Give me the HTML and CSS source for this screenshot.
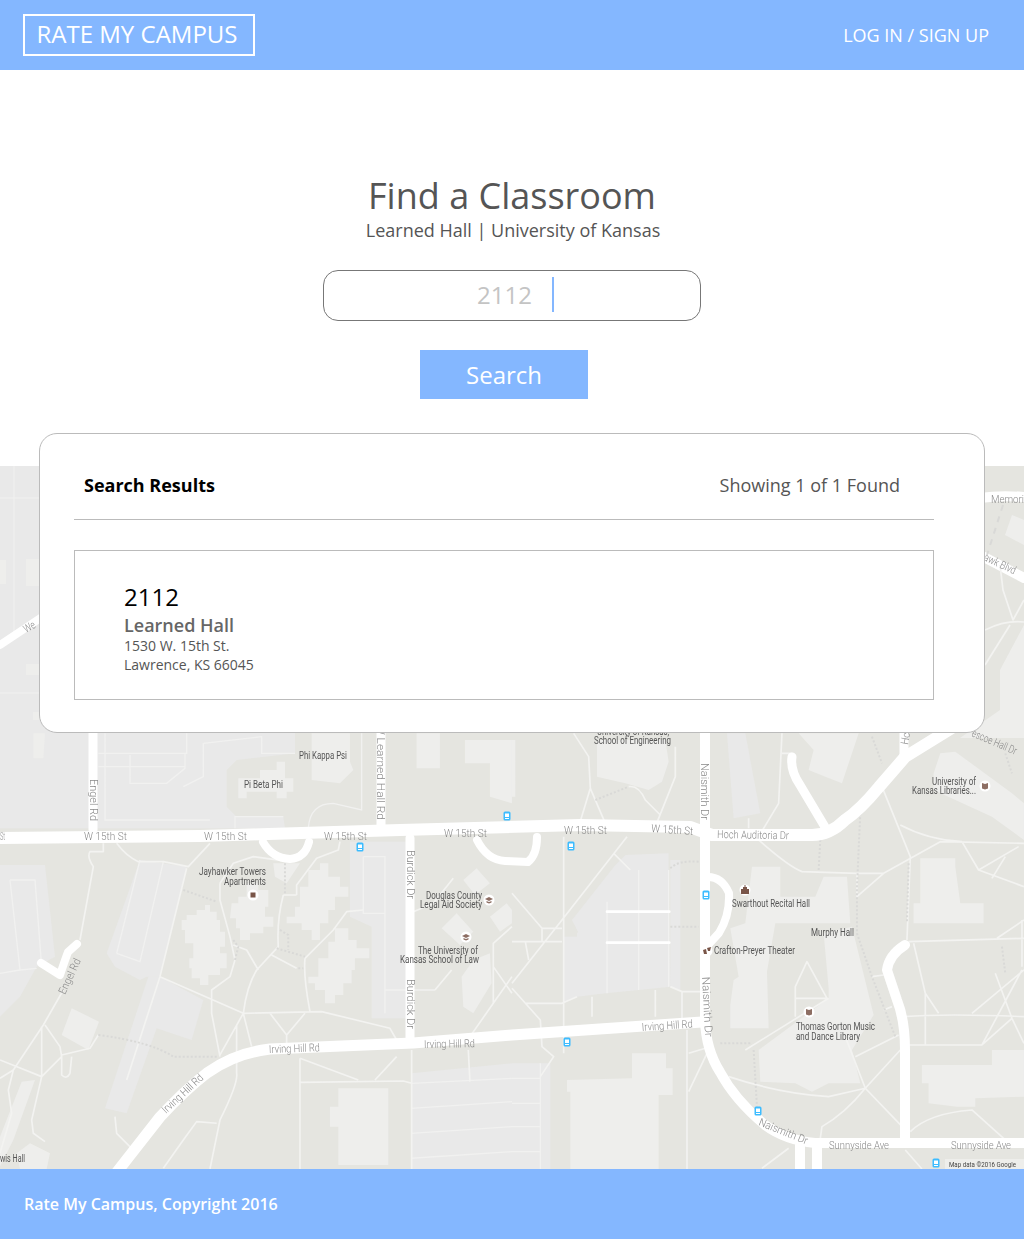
FILE: index.html
```html
<!DOCTYPE html>
<html lang="en">
<head>
    <meta charset="UTF-8">
    <meta name="viewport" content="width=device-width, initial-scale=1.0">
    <title>Rate My Campus</title>
    <link rel="stylesheet" href="styles.css">
</head>
<body>
    <header class="topbar">
        <a class="logo" href="#">RATE MY CAMPUS</a>
        <a class="login" href="#">LOG IN / SIGN UP</a>
    </header>

    <main class="content">
        <!-- map sits behind the results panel -->
        <svg class="map" viewBox="0 466 1024 703" aria-hidden="true">
            <defs>
                <g id="bus">
                    <rect x="-3.5" y="-4.5" width="7" height="9" rx="1.5" fill="#3dbcff"/>
                    <rect x="-2" y="-2.5" width="4" height="3.5" fill="#fff"/>
                    <rect x="-2" y="2" width="4" height="1" fill="#fff"/>
                </g>
                <circle id="poi" r="5.5" fill="#fff"/>
                <path id="book" d="M-3-3 L0-2 L3-3 V2.5 L0 3.5 L-3 2.5Z" fill="#8d6e63"/>
                <path id="cap" d="M-4-1 L0-3 L4-1 L0 1Z M-2.5 1 L0 2 L2.5 1 V2.5 L0 3.5 L-2.5 2.5Z" fill="#8d6e63"/>
            </defs>

            <rect x="0" y="466" width="1024" height="703" fill="#e5e5e0"/>

            <!-- top strip either side of the panel -->
            <g>
                <rect x="0" y="466" width="45" height="272" fill="#e9e9e9"/>
                <path class="thin" stroke-width=".8" d="M14 466V640 M0 498H45 M0 693H45"/>
                <path class="bld" d="M0 560H6V584H0Z M26 559H39V586H26Z M26 664H39V675H26Z M33 712H45V738H33Z"/>
                <path class="road" stroke-width="8" d="M0 645L45 615"/>
                <path class="bld" d="M1012 515L1024 520V545L1005 535Z M1024 625L1000 670V710L960 738H1024Z"/>
                <path class="road" stroke-width="10" d="M980 498Q1000 495 1024 497 M980 555L1024 578"/>
                <path class="thin" stroke-width="1.7" d="M1000 565L1003 590L1013 620L1024 600 M985 630Q1005 620 1024 622 M985 665L1010 625"/>
                <path class="dots" stroke-width="2" d="M1003 505L987 555"/>
            </g>

            <!-- west half of the campus -->
            <g transform="translate(0 720) scale(.3333)">
                <path class="lot" d="M0 0H885V100L710 120L680 150V260L710 290L850 290L855 325H0Z"/>
                <path class="lot" d="M0 435H135L165 710L110 740L60 830L0 890Z"/>
                <path class="lot" d="M320 700L420 420L560 440L480 770L440 770L420 780L345 740Z"/>
                <path class="lot" d="M480 770L610 840L575 960L470 925L380 1180L315 1165L445 770Z"/>
                <path class="lot" d="M1050 365H1220V895H1115V620L1050 590Z"/>
                <path class="lot" d="M1235 1060L1536 1030V1347H1235Z"/>
                <path class="lotline" d="M30 480H105L125 740 M30 480L60 750 M0 760L60 750L110 745 M295 100H560V40 M390 105V190H500L555 145V100 M295 140H555 M610 70L785 50V100H885 M550 200L610 170V70 M315 40V300H630 M350 700L420 420 M350 700L420 725L490 425 M1090 410H1155V810 M1090 410V580H1155 M1155 880V810H1305"/>
                <path class="lotline" d="M1235 1165L1536 1145 M1235 1240L1536 1220 M1235 1315L1536 1295 M1235 1090L1536 1075"/>
                <path class="bld" d="M215 865L297 905L265 990L185 945Z M65 1085L105 1080L40 1260L0 1340V1250Z M50 1300L90 1270L150 1300L140 1347H60Z"/>
                <!-- jayhawker towers -->
                <path class="bld" d="M545 600H560V585H590V570H615V555H630V575H650V600H660V635H675V680H660V700H680V745H660V765H625V795H600V775H575V745H568V715H580V670H555V630H545Z"/>
                <path class="bld" d="M695 550H715V530H740V490H775V510H805V560H795V590H820V620H790V640H750V660H720V625H708V595H690Z"/>
                <path class="bld" d="M860 590H885V560H900V500H925V450H960V430H985V470H1020V500H1045V530H1005V570H985V610H960V660H935V630H905V610H860Z"/>
                <path class="bld" d="M925 770H955V715H985V665H1005V625H1045V660H1070V685H1108V715H1065V750H1055V790H1030V825H1005V850H975V810H945V790H925Z"/>
                <path class="bld" d="M820 430H900L860 490L825 470Z"/>
                <path class="bld" d="M935 40H1050V125L1060 150L1020 190L935 180Z M715 175H780V150H830V125H855V175H880V215H860V235H830V215H740V235H715Z M100 40H135L130 115H100Z M1250 40H1320V145H1250Z M1395 60H1536V250L1470 230V130H1395Z"/>
                <path class="bld" d="M1390 480L1430 445L1470 490L1425 525Z M1325 625L1370 580L1420 635L1380 675Z M1470 590L1520 550L1536 570V610L1500 635Z M1385 770L1420 720L1470 700L1475 790L1420 880L1390 860Z M990 1160H1015V1105H1165V1335H1015V1220H990Z"/>
                <path class="lotline" d="M705 325V290H850 M925 325Q930 250 1000 250L1085 270V40"/>
                <path class="thin" stroke-width="5" d="M350 370Q380 410 415 425L490 425L565 440L630 370 M310 370V395H270Q260 410 280 440L240 660 M190 810L130 915L40 1050L0 1075 M135 915L180 980L185 1010L125 1070L0 1020 M125 920V1070L95 1200L100 1240L135 1265 M295 945L270 985L185 1005 M185 1010V1065Q200 1080 210 1060L215 1010 M40 1050L25 1110L35 1180L0 1300"/>
                <path class="thin" stroke-width="5" d="M480 770L730 880 M730 880L965 875L1170 925L1190 960 M1190 1010L1125 1080 M900 1015L1075 1080 M900 1087L1210 1083L1235 1090 M900 1015V1347 M1235 990V1347 M810 880L860 945L915 880 M860 945V970 M730 880L660 1005 M730 880L755 980 M710 915V1060Q715 1090 660 1200L630 1347 M850 525Q830 600 835 680L770 750Q740 800 730 880 M890 525H850 M1020 365L1015 390L950 415L890 495V525 M815 705L890 745 M915 715L1000 630L1040 575L1090 570 M915 715Q910 770 930 875 M660 490V540L690 650L705 720L690 770L635 810V880L660 1010 M660 490L700 430L760 410L870 425 M700 675L740 690L775 750 M1230 580L1300 550L1360 475 M1305 810L1355 750 M1405 990L1410 1085 M1480 850V670L1536 620 M1480 740L1536 820 M1410 950L1480 850L1536 770 M490 1345L550 1260L590 1205L650 1210 M345 1190L350 1240L395 1285 M560 445L480 770L380 1080"/>
                <path class="dots" stroke-width="6" d="M550 510L650 545 M295 945Q450 965 520 1010H655 M855 430V525 M840 630L865 645V690 M830 685L915 710 M895 745H910 M700 660L715 680L705 720"/>
            </g>

            <!-- east half of the campus -->
            <g transform="translate(512 720) scale(.3333)">
                <path class="lot" d="M0 1030H115V1347H0Z M195 640L355 450H470L475 800L380 810L280 820L195 830Z M155 650H195V830L155 850Z M180 600L310 435L340 405L470 400V450H355L200 640Z M475 420H505V810L475 800Z M645 40H700L745 280L665 295Z"/>
                <path class="lotline" d="M380 450V810 M470 450V800 M285 545V820 M0 1075H85 M0 1150H85 M0 1220H85 M0 1295H85 M85 1030V1347"/>
                <path class="bld" d="M720 440H805V530H910L935 470H1005L1015 610H790L765 755L770 925H655V855L665 780L680 770L655 625L700 610Z"/>
                <path class="bld" d="M935 640L1020 620L1085 885L1045 910L1030 960H1000L950 835V805Z M740 990L950 835V805H1050L1085 885L1020 990L1045 1090H950L900 1115L850 1090L745 1085Z"/>
                <path class="bld" d="M255 60H460L470 125L450 185L410 210L340 190L320 185L255 170Z M890 40H1040L1010 130L990 190L940 170L890 150L905 90L860 40Z M1265 160L1285 100L1330 95L1500 220L1536 250V360L1440 290L1265 210Z M1225 415H1330V440L1345 550H1415V610H1205V550H1225Z M1230 1035H1440V990H1536V1130L1390 1135V1160H1335L1250 1150V1090H1230Z M165 1080L360 1075V1000H462V1045H482V1125H440V1347H175V1115H165Z M0 60H10V230H0Z"/>
                <path class="thin" stroke-width="5" d="M185 40L230 110L235 205 M235 205L280 310 M235 205L200 320 M350 200Q380 195 400 240L445 285 M490 80V170L430 320 M155 350V1000 M345 350L150 600L0 790 M305 400L355 450 M0 520L90 625H150 M90 625V665H0 M40 665L50 720 M90 665H150 M0 805L85 900L90 980L125 1010L85 1070 M40 850H150L195 830 M240 830V890 M430 810V890 M475 800L510 815H565 M510 815V900 M525 930V1347 M530 1000L580 985 M530 1115L590 990 M650 1070Q800 1120 950 1130L1060 1105 M1060 1105L1185 1235 M1060 1105Q1000 1180 930 1220L925 1255 M1060 1105L1000 950 M1030 1010L1160 945 M1060 1105L1165 990 M750 1345L830 1285 M700 990L950 835 M850 890V800L885 725L945 835H850"/>
                <path class="thin" stroke-width="5" d="M740 360Q830 440 870 455L1035 460H1115 M1035 460V530L1115 460 M1115 460L1285 365L1536 370 M1165 315Q1250 360 1350 365 M1350 365L1400 450L1536 500 M1400 450L1520 380 M1440 475L1480 410 M1110 200L1195 410L1185 660 M1190 665L1536 655 M1205 670L1240 820V975 M1240 820L1280 880 M1175 890Q1300 880 1536 890 M1190 975H1410L1530 750 M1380 880L1536 750 M1450 760L1500 895L1536 970 M1410 975L1500 895 M1455 655L1536 600 M1530 600V740 M1195 1235Q1250 1180 1380 1170L1480 1260 M1080 770L1115 765 M1115 870L1140 860 M810 100H840 M810 40L800 250L740 350 M710 295V325 M1180 1290L1230 1347"/>
                <path class="dots" stroke-width="6" d="M250 240L350 200 M475 620H560 M475 445Q500 420 560 425 M625 970H715 M725 990L735 1160 M925 360L920 450 M1045 280L1035 500V640L1080 770L1150 950 M1190 430L1185 605 M1080 50L1110 130 M1470 680L1480 760 M1480 100L1500 160"/>
                <path class="road" stroke-width="8" d="M285 575H472 M285 668H472"/>
            </g>

            <!-- main roads, page coordinates -->
            <g>
                <path class="road" stroke-width="12" d="M0 838L200 836L400 830L580 825L690 827L712 835H812Q830 835 845 820Q860 810 879 787L905 757L952 728"/>
                <path class="road" stroke-width="9" d="M93 733V830 M381 733V828 M410 838V1042 M792 757Q790 770 800 785L825 827 M904 733V755"/>
                <path class="road" stroke-width="10" d="M705 733V1020Q706 1050 720 1072Q735 1100 765 1125Q785 1140 815 1143H1024"/>
                <path class="road" stroke-width="11" d="M117 1172L160 1117Q185 1090 207 1073Q235 1053 270 1049L413 1043L512 1035L702 1022"/>
                <path class="road" stroke-width="8" d="M263 842Q272 858 290 859Q305 858 309 842 M477 840Q487 860 505 861L528 862Q537 855 537 837 M708 877Q722 877 729 893Q730 915 719 933L708 945"/>
                <path class="road" stroke-width="8" d="M41 963L60 975Q65 960 68 952L77 944"/>
                <path class="road" stroke-width="10" d="M905 945Q889 955 887 970L897 1000Q905 1020 905 1050V1143 M800 1145V1169 M817 1145V1169"/>
            </g>

            <!-- road names -->
            <g class="roadname">
                <text x="0" y="840" textLength="5" lengthAdjust="spacingAndGlyphs">St</text>
                <text x="84" y="840" textLength="43" lengthAdjust="spacingAndGlyphs">W 15th St</text>
                <text x="204" y="840" textLength="43" lengthAdjust="spacingAndGlyphs">W 15th St</text>
                <text x="324" y="840" textLength="43" lengthAdjust="spacingAndGlyphs">W 15th St</text>
                <text x="444" y="837" textLength="43" lengthAdjust="spacingAndGlyphs">W 15th St</text>
                <text x="564" y="834" textLength="43" lengthAdjust="spacingAndGlyphs">W 15th St</text>
                <text transform="translate(651 832) rotate(4)" textLength="42" lengthAdjust="spacingAndGlyphs">W 15th St</text>
                <text transform="translate(717 838) rotate(1)" textLength="72" lengthAdjust="spacingAndGlyphs">Hoch Auditoria Dr</text>
                <text transform="translate(269 1053) rotate(-2)" textLength="51" lengthAdjust="spacingAndGlyphs">Irving Hill Rd</text>
                <text transform="translate(424 1048) rotate(-1)" textLength="51" lengthAdjust="spacingAndGlyphs">Irving Hill Rd</text>
                <text transform="translate(642 1031) rotate(-4)" textLength="51" lengthAdjust="spacingAndGlyphs">Irving Hill Rd</text>
                <text transform="translate(166 1114) rotate(-43)" textLength="52" lengthAdjust="spacingAndGlyphs">Irving Hill Rd</text>
                <text transform="translate(90 779) rotate(90)" textLength="42" lengthAdjust="spacingAndGlyphs">Engel Rd</text>
                <text transform="translate(65 995) rotate(-65)" textLength="38" lengthAdjust="spacingAndGlyphs">Engel Rd</text>
                <text transform="translate(377 724) rotate(90)" textLength="96" lengthAdjust="spacingAndGlyphs">W Learned Hall Rd</text>
                <text transform="translate(407 850) rotate(90)" textLength="49" lengthAdjust="spacingAndGlyphs">Burdick Dr</text>
                <text transform="translate(407 979) rotate(90)" textLength="50" lengthAdjust="spacingAndGlyphs">Burdick Dr</text>
                <text transform="translate(701 763) rotate(90)" textLength="57" lengthAdjust="spacingAndGlyphs">Naismith Dr</text>
                <text transform="translate(702 977) rotate(87)" textLength="60" lengthAdjust="spacingAndGlyphs">Naismith Dr</text>
                <text transform="translate(758 1125) rotate(22)" textLength="52" lengthAdjust="spacingAndGlyphs">Naismith Dr</text>
                <text x="829" y="1149" textLength="60" lengthAdjust="spacingAndGlyphs">Sunnyside Ave</text>
                <text x="951" y="1149" textLength="60" lengthAdjust="spacingAndGlyphs">Sunnyside Ave</text>
                <text x="991" y="503" textLength="33" lengthAdjust="spacingAndGlyphs">Memori</text>
                <text transform="translate(26 633) rotate(-30)" textLength="12" lengthAdjust="spacingAndGlyphs">We</text>
                <text transform="translate(983 560) rotate(25)" textLength="34" lengthAdjust="spacingAndGlyphs">awk Blvd</text>
                <text transform="translate(971 736) rotate(23)" textLength="48" lengthAdjust="spacingAndGlyphs">escoe Hall Dr</text>
                <text transform="translate(908 745) rotate(-80)" textLength="12" lengthAdjust="spacingAndGlyphs">Hc</text>
            </g>

            <!-- places -->
            <g class="placename">
                <text x="299" y="759" textLength="48" lengthAdjust="spacingAndGlyphs">Phi Kappa Psi</text>
                <text x="244" y="788" textLength="39" lengthAdjust="spacingAndGlyphs">Pi Beta Phi</text>
                <text x="199" y="875" textLength="67" lengthAdjust="spacingAndGlyphs">Jayhawker Towers</text>
                <text x="224" y="885" textLength="42" lengthAdjust="spacingAndGlyphs">Apartments</text>
                <text x="426" y="899" textLength="56" lengthAdjust="spacingAndGlyphs">Douglas County</text>
                <text x="420" y="908" textLength="62" lengthAdjust="spacingAndGlyphs">Legal Aid Society</text>
                <text x="418" y="954" textLength="60" lengthAdjust="spacingAndGlyphs">The University of</text>
                <text x="400" y="963" textLength="79" lengthAdjust="spacingAndGlyphs">Kansas School of Law</text>
                <text x="0" y="1162" textLength="25" lengthAdjust="spacingAndGlyphs">wis Hall</text>
                <text x="597" y="735" textLength="72" lengthAdjust="spacingAndGlyphs">University of Kansas,</text>
                <text x="594" y="744" textLength="77" lengthAdjust="spacingAndGlyphs">School of Engineering</text>
                <text x="932" y="785" textLength="44" lengthAdjust="spacingAndGlyphs">University of</text>
                <text x="912" y="794" textLength="64" lengthAdjust="spacingAndGlyphs">Kansas Libraries...</text>
                <text x="732" y="907" textLength="78" lengthAdjust="spacingAndGlyphs">Swarthout Recital Hall</text>
                <text x="811" y="936" textLength="43" lengthAdjust="spacingAndGlyphs">Murphy Hall</text>
                <text x="714" y="954" textLength="81" lengthAdjust="spacingAndGlyphs">Crafton-Preyer Theater</text>
                <text x="796" y="1030" textLength="79" lengthAdjust="spacingAndGlyphs">Thomas Gorton Music</text>
                <text x="796" y="1040" textLength="64" lengthAdjust="spacingAndGlyphs">and Dance Library</text>
            </g>

            <!-- pins -->
            <use href="#bus" x="507" y="816"/>
            <use href="#bus" x="360" y="847"/>
            <use href="#bus" x="571" y="846"/>
            <use href="#bus" x="706" y="895"/>
            <use href="#bus" x="567" y="1042"/>
            <use href="#bus" x="758" y="1111"/>
            <use href="#bus" x="936" y="1163"/>

            <use href="#poi" x="253" y="895"/>
            <rect x="250.500" y="892.500" width="5" height="5" fill="#795548"/>
            <use href="#poi" x="489" y="900"/>
            <use href="#cap" x="489" y="900"/>
            <use href="#poi" x="466" y="937"/>
            <use href="#cap" x="466" y="937"/>
            <use href="#poi" x="745" y="890"/>
            <path d="M741 894V889H743V887H744.500V885H745.500V887H747V889H749V894Z" fill="#795548"/>
            <use href="#poi" x="707" y="951"/>
            <path d="M703 950L706 949L707 954L704 954Z M707 948L711 947L710 951L708 951Z" fill="#795548"/>
            <use href="#poi" x="809" y="1012"/>
            <use href="#book" x="809" y="1012"/>
            <use href="#poi" x="985" y="786"/>
            <use href="#book" x="985" y="786"/>

            <rect x="945" y="1159" width="79" height="10" fill="#fff" opacity=".35"/>
            <text class="credit" x="949" y="1167" textLength="67" lengthAdjust="spacingAndGlyphs">Map data ©2016 Google</text>
        </svg>

        <section class="hero">
            <h1>Find a Classroom</h1>
            <p class="subtitle">Learned Hall | University of Kansas</p>
            <div class="searchbox">
                <span class="query">2112</span>
                <span class="caret"></span>
            </div>
            <button class="btn-search">Search</button>
        </section>

        <section class="results">
            <div class="results-head">
                <h2>Search Results</h2>
                <span class="count">Showing 1 of 1 Found</span>
            </div>
            <div class="result-card">
                <div class="room">2112</div>
                <div class="building">Learned Hall</div>
                <div class="address">1530 W. 15th St.</div>
                <div class="address">Lawrence, KS 66045</div>
            </div>
        </section>
    </main>

    <footer class="footer">Rate My Campus, Copyright 2016</footer>
</body>
</html>
```

FILE: styles.css
```css
body {
    font-family: "Open Sans", Arial, sans-serif;
    margin: 0;
    color: #555;
    background-color: #fff;
}
.topbar {
    height: 70px;
    box-sizing: border-box;
    padding: 0 35px 0 23px;
    display: flex;
    align-items: center;
    justify-content: space-between;
    background-color: #84b7ff;
}
.logo {
    width: 232px;
    height: 42px;
    box-sizing: border-box;
    padding: 0 4px 3px 0;
    border: 2px solid #fff;
    display: flex;
    align-items: center;
    justify-content: center;
    color: #fff;
    font-size: 24px;
    text-decoration: none;
}
.login {
    color: #fff;
    font-size: 18px;
    text-decoration: none;
}
.content {
    position: relative;
    height: 1099px;
}
.map {
    position: absolute;
    left: 0;
    bottom: 0;
    width: 1024px;
    height: 703px;
    display: block;
    filter: blur(.4px);
}
.thin {
    fill: none;
    stroke: #f3f3f1;
    stroke-linejoin: round;
}
.dots {
    fill: none;
    stroke: #d9d9d7;
    stroke-dasharray: 6 6;
}
.road {
    fill: none;
    stroke: #fff;
    stroke-linecap: round;
    stroke-linejoin: round;
}
.bld {
    fill: #eeeeec;
}
.lot {
    fill: #e9e9e9;
}
.lotline {
    fill: none;
    stroke: #f1f1f0;
    stroke-width: 4;
}
.roadname text {
    font-family: Roboto, sans-serif;
    font-size: 11px;
    font-weight: 300;
    fill: #8a8a8a;
}
.placename text {
    font-family: Roboto, sans-serif;
    font-size: 10px;
    fill: #555;
}
.credit {
    font-family: Roboto, sans-serif;
    font-size: 8px;
    fill: #444;
}
.hero {
    position: relative;
    padding-top: 101px;
    display: flex;
    flex-direction: column;
    align-items: center;
}
h1 {
    margin: 0;
    font-size: 36px;
    font-weight: 400;
    line-height: 50px;
}
.subtitle {
    margin: -1px 0 0;
    padding-left: 2px;
    font-size: 18px;
    line-height: 20px;
}
.searchbox {
    width: 378px;
    height: 51px;
    box-sizing: border-box;
    margin-top: 30px;
    padding: 0 0 2px 7px;
    display: flex;
    align-items: center;
    justify-content: center;
    gap: 20px;
    border: 1px solid #777;
    border-radius: 15px;
    background-color: #fff;
}
.query {
    color: #c4c4c4;
    font-size: 24px;
}
.caret {
    width: 2px;
    height: 35px;
    background-color: #84b7ff;
}
.btn-search {
    width: 168px;
    height: 49px;
    margin: 29px 16px 0 0;
    border: none;
    background-color: #84b7ff;
    color: #fff;
    font-family: inherit;
    font-size: 24px;
    padding: 0;
}
.results {
    position: relative;
    box-sizing: border-box;
    width: 946px;
    height: 300px;
    margin: 34px 0 0 39px;
    padding: 0 50px 0 34px;
    border: 1px solid #bbb;
    border-radius: 18px;
    background-color: #fff;
}
.results-head {
    height: 86px;
    box-sizing: border-box;
    padding: 17px 34px 0 10px;
    display: flex;
    align-items: center;
    justify-content: space-between;
    border-bottom: 1px solid #bbb;
}
h2 {
    margin: 0;
    color: #000;
    font-size: 18px;
    font-weight: 700;
}
.count {
    font-size: 18px;
}
.result-card {
    height: 150px;
    box-sizing: border-box;
    margin-top: 30px;
    padding: 29px 49px 0;
    border: 1px solid #bbb;
}
.room {
    color: #000;
    font-size: 24px;
    font-weight: 500;
    line-height: 34px;
}
.building {
    color: #666;
    font-size: 18px;
    font-weight: 600;
    line-height: 22px;
}
.address {
    font-size: 14px;
    line-height: 19px;
}
.footer {
    height: 70px;
    padding-left: 24px;
    display: flex;
    align-items: center;
    background-color: #84b7ff;
    color: #fff;
    font-size: 16px;
    font-weight: 600;
}
```
